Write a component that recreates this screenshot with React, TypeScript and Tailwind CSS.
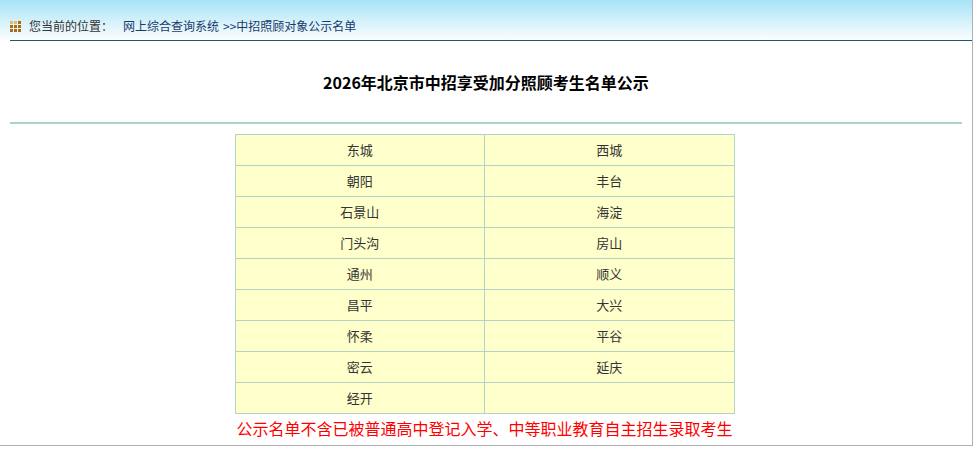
const rows = [
  ["东城", "西城"],
  ["朝阳", "丰台"],
  ["石景山", "海淀"],
  ["门头沟", "房山"],
  ["通州", "顺义"],
  ["昌平", "大兴"],
  ["怀柔", "平谷"],
  ["密云", "延庆"],
  ["经开", ""],
];

export default function App() {
  return (
    <div className="w-[980px] h-[453px] bg-white" style={{ fontFamily: '"Noto Sans CJK SC", "Liberation Sans", sans-serif' }}>
      <div className="w-[973px] h-[446px] border-r border-b border-[#b0b0b0] bg-white">
        <div className="h-[42px] bg-gradient-to-b from-[#a6e3f6] to-white pl-[10px] pt-[16px]">
          <div className="flex items-center h-[20px] text-[12px] text-[#333]">
            <div className="grid grid-cols-3 gap-[1px] w-[11px] h-[11px] mr-[8px]">
              {[0, 1, 2, 3, 4, 5, 6, 7, 8].map((i) => (
                <span key={i} className={i === 0 || i === 1 ? "bg-[#e6b86a]" : "bg-[#b06a10]"} />
              ))}
            </div>
            <span>您当前的位置：</span>
            <span className="ml-[10px] text-[#1a3a6a]">网上综合查询系统</span>
            <span className="ml-[4px] text-[#1a3a6a]">&gt;&gt;中招照顾对象公示名单</span>
          </div>
          <div className="mt-[4px] h-px bg-[#1d5a6a]" />
        </div>
        <div className="h-[80px] flex items-center justify-center text-[16px] font-bold text-black">
          2026年北京市中招享受加分照顾考生名单公示
        </div>
        <div className="mx-[10px] h-[2px] bg-[#a9d5c9]" />
        <div className="mt-[10px] flex flex-col items-center pr-[3px]">
          <table className="w-[500px] border-collapse bg-[#ffffcc] text-[13px] text-[#333]">
            <tbody>
              {rows.map(([a, b]) => (
                <tr key={a} className="h-[31px]">
                  <td className="w-1/2 border border-[#b3d4c4] text-center">{a}</td>
                  <td className="w-1/2 border border-[#b3d4c4] text-center">{b}</td>
                </tr>
              ))}
            </tbody>
          </table>
          <div className="mt-[2px] text-[16px] text-[#ff0000] leading-[24px]">
            公示名单不含已被普通高中登记入学、中等职业教育自主招生录取考生
          </div>
        </div>
      </div>
    </div>
  );
}
